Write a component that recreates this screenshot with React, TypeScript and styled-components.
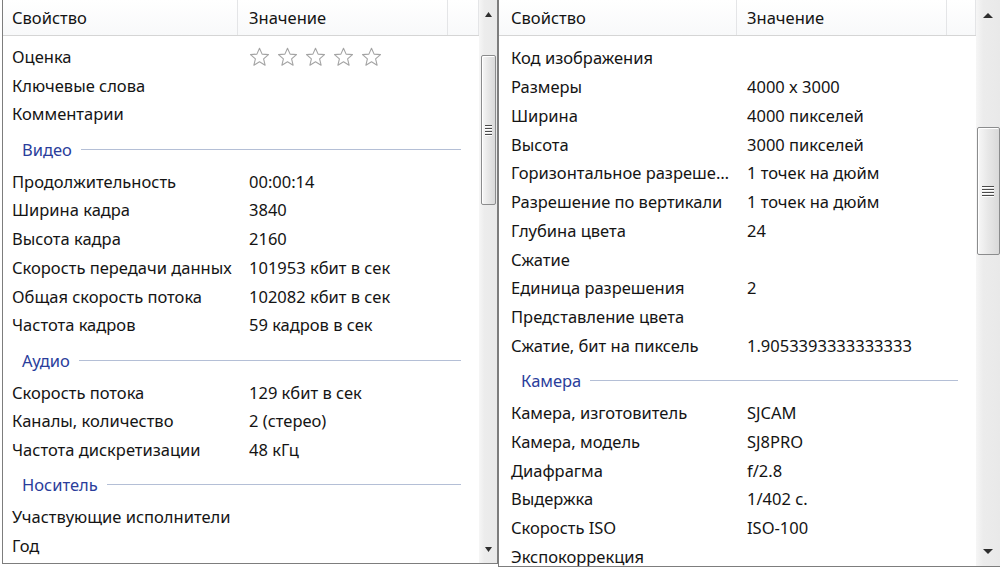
import React from "react";
import styled, { createGlobalStyle } from "styled-components";

const GlobalStyle = createGlobalStyle`
  html, body { margin: 0; padding: 0; background: #ffffff; }
  body { font-family: "Noto Sans", "Open Sans", sans-serif; color: #141414; }
  * { box-sizing: border-box; }
`;

type Item =
  | { kind: "row"; name: string; value?: string; stars?: boolean }
  | { kind: "group"; name: string };

const leftItems: Item[] = [
  { kind: "row", name: "Оценка", stars: true },
  { kind: "row", name: "Ключевые слова" },
  { kind: "row", name: "Комментарии" },
  { kind: "group", name: "Видео" },
  { kind: "row", name: "Продолжительность", value: "00:00:14" },
  { kind: "row", name: "Ширина кадра", value: "3840" },
  { kind: "row", name: "Высота кадра", value: "2160" },
  { kind: "row", name: "Скорость передачи данных", value: "101953 кбит в сек" },
  { kind: "row", name: "Общая скорость потока", value: "102082 кбит в сек" },
  { kind: "row", name: "Частота кадров", value: "59 кадров в сек" },
  { kind: "group", name: "Аудио" },
  { kind: "row", name: "Скорость потока", value: "129 кбит в сек" },
  { kind: "row", name: "Каналы, количество", value: "2 (стерео)" },
  { kind: "row", name: "Частота дискретизации", value: "48 кГц" },
  { kind: "group", name: "Носитель" },
  { kind: "row", name: "Участвующие исполнители" },
  { kind: "row", name: "Год" },
];

const rightItems: Item[] = [
  { kind: "row", name: "Код изображения" },
  { kind: "row", name: "Размеры", value: "4000 x 3000" },
  { kind: "row", name: "Ширина", value: "4000 пикселей" },
  { kind: "row", name: "Высота", value: "3000 пикселей" },
  { kind: "row", name: "Горизонтальное разрешение", value: "1 точек на дюйм" },
  { kind: "row", name: "Разрешение по вертикали", value: "1 точек на дюйм" },
  { kind: "row", name: "Глубина цвета", value: "24" },
  { kind: "row", name: "Сжатие" },
  { kind: "row", name: "Единица разрешения", value: "2" },
  { kind: "row", name: "Представление цвета" },
  { kind: "row", name: "Сжатие, бит на пиксель", value: "1.9053393333333333" },
  { kind: "group", name: "Камера" },
  { kind: "row", name: "Камера, изготовитель", value: "SJCAM" },
  { kind: "row", name: "Камера, модель", value: "SJ8PRO" },
  { kind: "row", name: "Диафрагма", value: "f/2.8" },
  { kind: "row", name: "Выдержка", value: "1/402 с." },
  { kind: "row", name: "Скорость ISO", value: "ISO-100" },
  { kind: "row", name: "Экспокоррекция" },
];

const Screen = styled.div`
  display: flex;
  align-items: flex-start;
  width: 1000px;
  height: 569px;
  overflow: hidden;
  background: #ffffff;
`;

const Panel = styled.section<{ $width: number; $height: number; $ml: number }>`
  flex: none;
  display: flex;
  width: ${(p) => p.$width}px;
  height: ${(p) => p.$height}px;
  margin-left: ${(p) => p.$ml}px;
  border: 1px solid #7d7d7d;
  border-top: none;
  background: #ffffff;
  overflow: hidden;
`;

const Main = styled.div`
  flex: 1;
  min-width: 0;
  display: flex;
  flex-direction: column;
  overflow: hidden;
`;

const Header = styled.div<{ $cols: string }>`
  flex: none;
  display: grid;
  grid-template-columns: ${(p) => p.$cols};
  height: 36px;
  border-bottom: 1px solid #d5d5d5;
  background: linear-gradient(#ffffff, #f8f9fa);
`;

const HeaderCell = styled.div<{ $pad: number }>`
  display: flex;
  align-items: center;
  padding-left: ${(p) => p.$pad}px;
  border-right: 1px solid #e4e5e7;
  font-size: 16.5px;
  color: #141414;
  white-space: nowrap;
`;

const List = styled.div<{ $pt: number }>`
  flex: none;
  display: flex;
  flex-direction: column;
  padding-top: ${(p) => p.$pt}px;
`;

const Row = styled.div<{ $cols: string }>`
  flex: none;
  display: grid;
  grid-template-columns: ${(p) => p.$cols};
  height: 28.75px;
  align-items: center;
  font-size: 16.5px;
`;

const Cell = styled.div<{ $pad: number }>`
  padding-left: ${(p) => p.$pad}px;
  padding-right: 2px;
  white-space: nowrap;
  overflow: hidden;
  text-overflow: ellipsis;
  line-height: 21px;
`;

const Stars = styled.div<{ $pad: number }>`
  display: flex;
  gap: 7px;
  padding-left: ${(p) => p.$pad}px;
  padding-top: 1px;
`;

const Group = styled.div<{ $pad: number }>`
  flex: none;
  display: flex;
  align-items: center;
  gap: 9px;
  height: 38.5px;
  padding: 3px 18px 0 ${(p) => p.$pad}px;
  font-size: 16.5px;
  color: #2a3d9b;
`;

const GroupLine = styled.div`
  flex: 1;
  height: 1px;
  background: #b4bfd6;
`;

const ScrollBar = styled.div<{ $w: number }>`
  flex: none;
  width: ${(p) => p.$w}px;
  display: flex;
  flex-direction: column;
  align-items: center;
  background: linear-gradient(90deg, #f6f6f6, #ececec 30%, #e9e9e9);
`;

const Arrow = styled.div<{ $h: number }>`
  flex: none;
  height: ${(p) => p.$h}px;
  width: 100%;
  display: flex;
  align-items: center;
  justify-content: center;
`;

const Track = styled.div`
  flex: 1;
  width: 100%;
  display: flex;
  flex-direction: column;
  align-items: center;
`;

const Thumb = styled.div<{ $top: number; $h: number; $w: number }>`
  margin-top: ${(p) => p.$top}px;
  height: ${(p) => p.$h}px;
  width: ${(p) => p.$w}px;
  border: 1px solid #8b8c8d;
  border-radius: 2px;
  background: linear-gradient(90deg, #f7f7f7, #e8e8e8 45%, #d9d9d9);
  box-shadow: inset 1px 1px 0 #ffffff;
  display: flex;
  align-items: center;
  justify-content: center;
`;

const Grip = styled.div<{ $w: number }>`
  width: ${(p) => p.$w}px;
  display: flex;
  flex-direction: column;
  gap: 2px;
  & > span {
    display: block;
    height: 1px;
    background: #4a4a4a;
    box-shadow: 0 1px 0 #ffffff;
  }
`;

const Star = () => (
  <svg width="21" height="20" viewBox="0 0 21 20">
    <polygon
      points="10.5,1.2 13.1,7.1 19.5,7.6 14.6,11.8 16.1,18.2 10.5,14.8 4.9,18.2 6.4,11.8 1.5,7.6 7.9,7.1"
      fill="#ffffff"
      stroke="#a4a4a4"
      strokeWidth="1.1"
      strokeLinejoin="round"
    />
  </svg>
);

const Tri = ({ up, w }: { up: boolean; w: number }) => (
  <svg width={w} height="5" viewBox={`0 0 ${w} 5`}>
    <polygon
      points={up ? `0,5 ${w},5 ${w / 2},0` : `0,0 ${w},0 ${w / 2},5`}
      fill="#2e2e2e"
    />
  </svg>
);

type PanelProps = {
  items: Item[];
  width: number;
  height: number;
  ml: number;
  propW: number;
  propPad: number;
  valPad: number;
  pt: number;
  sb: { w: number; arrowH: number; top: number; h: number; thumbW: number; gripW: number; triW: number };
};

const PropertyPanel = ({ items, width, height, ml, propW, propPad, valPad, pt, sb }: PanelProps) => {
  const cols = `${propW}px 1fr`;
  return (
    <Panel $width={width} $height={height} $ml={ml}>
      <Main>
        <Header $cols={`${propW}px 210px 1fr`}>
          <HeaderCell $pad={propPad}>Свойство</HeaderCell>
          <HeaderCell $pad={valPad}>Значение</HeaderCell>
          <HeaderCell $pad={0} />
        </Header>
        <List $pt={pt}>
          {items.map((it, i) =>
            it.kind === "group" ? (
              <Group key={i} $pad={propPad + 10}>
                <span>{it.name}</span>
                <GroupLine />
              </Group>
            ) : (
              <Row key={i} $cols={cols}>
                <Cell $pad={propPad}>{it.name}</Cell>
                {it.stars ? (
                  <Stars $pad={valPad}>
                    {[0, 1, 2, 3, 4].map((s) => (
                      <Star key={s} />
                    ))}
                  </Stars>
                ) : (
                  <Cell $pad={valPad}>{it.value ?? ""}</Cell>
                )}
              </Row>
            )
          )}
        </List>
      </Main>
      <ScrollBar $w={sb.w}>
        <Arrow $h={sb.arrowH}>
          <Tri up w={sb.triW} />
        </Arrow>
        <Track>
          <Thumb $top={sb.top} $h={sb.h} $w={sb.thumbW}>
            <Grip $w={sb.gripW}>
              <span />
              <span />
              <span />
              <span />
            </Grip>
          </Thumb>
        </Track>
        <Arrow $h={sb.arrowH}>
          <Tri up={false} w={sb.triW} />
        </Arrow>
      </ScrollBar>
    </Panel>
  );
};

export default function App() {
  return (
    <>
      <GlobalStyle />
      <Screen>
        <PropertyPanel
          items={leftItems}
          width={496}
          height={564}
          ml={2}
          propW={235}
          propPad={9}
          valPad={11}
          pt={6}
          sb={{ w: 18, arrowH: 28, top: 27, h: 150, thumbW: 15, gripW: 7, triW: 7 }}
        />
        <PropertyPanel
          items={rightItems}
          width={503}
          height={567}
          ml={0}
          propW={238}
          propPad={12}
          valPad={10}
          pt={7.5}
          sb={{ w: 24, arrowH: 30, top: 97, h: 128, thumbW: 23, gripW: 12, triW: 10 }}
        />
      </Screen>
    </>
  );
}
